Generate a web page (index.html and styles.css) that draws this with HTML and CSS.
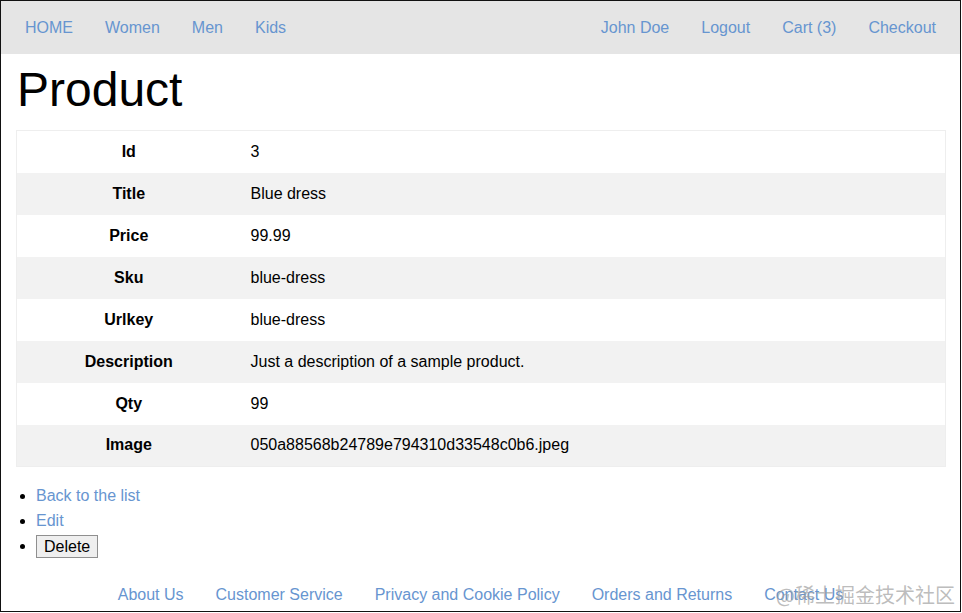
FILE: index.html
```html
<!DOCTYPE html>
<html lang="en">

<head>
    <meta charset="UTF-8">
    <meta name="viewport" content="width=device-width, initial-scale=1.0">
    <title>Product</title>
    <link rel="stylesheet" href="styles.css">
</head>

<body>
    <div class="frame">
        <nav class="topnav">
            <div class="nav-group">
                <a href="#">HOME</a>
                <a href="#">Women</a>
                <a href="#">Men</a>
                <a href="#">Kids</a>
            </div>
            <div class="nav-group">
                <a href="#">John Doe</a>
                <a href="#">Logout</a>
                <a href="#">Cart (3)</a>
                <a href="#">Checkout</a>
            </div>
        </nav>

        <main class="content">
            <h1>Product</h1>
            <table class="details">
                <tr>
                    <th>Id</th>
                    <td>3</td>
                </tr>
                <tr>
                    <th>Title</th>
                    <td>Blue dress</td>
                </tr>
                <tr>
                    <th>Price</th>
                    <td>99.99</td>
                </tr>
                <tr>
                    <th>Sku</th>
                    <td>blue-dress</td>
                </tr>
                <tr>
                    <th>Urlkey</th>
                    <td>blue-dress</td>
                </tr>
                <tr>
                    <th>Description</th>
                    <td>Just a description of a sample product.</td>
                </tr>
                <tr>
                    <th>Qty</th>
                    <td>99</td>
                </tr>
                <tr>
                    <th>Image</th>
                    <td>050a88568b24789e794310d33548c0b6.jpeg</td>
                </tr>
            </table>

            <ul class="actions">
                <li><a href="#">Back to the list</a></li>
                <li><a href="#">Edit</a></li>
                <li>
                    <form action="#" method="POST">
                        <button type="submit">Delete</button>
                    </form>
                </li>
            </ul>
        </main>

        <footer class="footer">
            <a href="#">About Us</a>
            <a href="#">Customer Service</a>
            <a href="#">Privacy and Cookie Policy</a>
            <a href="#">Orders and Returns</a>
            <a href="#">Contact Us</a>
        </footer>

        <div class="watermark">@稀土掘金技术社区</div>
    </div>
</body>

</html>
```

FILE: styles.css
```css
* {
    margin: 0;
    padding: 0;
    box-sizing: border-box;
    font-family: "Liberation Sans", Arial, Helvetica, sans-serif;
}

body {
    background: #fff;
    color: #000;
}

a {
    color: #6795d0;
    text-decoration: none;
}

.frame {
    position: relative;
    width: 961px;
    height: 612px;
    border: 1px solid #111;
    overflow: hidden;
}

.topnav {
    display: flex;
    justify-content: space-between;
    height: 53px;
    padding: 0 8px;
    background: #e5e5e5;
}

.nav-group {
    display: flex;
    align-items: center;
}

.nav-group a {
    padding: 0 16px;
    font-size: 16px;
}

.content {
    padding: 0 15px;
}

h1 {
    font-size: 48px;
    font-weight: normal;
    line-height: 56px;
    margin: 8px 0 12px 1px;
}

.details {
    width: 930px;
    border-collapse: collapse;
    border: 1px solid #eee;
    font-size: 16px;
}

.details tr {
    height: 42px;
}

.details tr:nth-child(even) {
    background: #f2f2f2;
}

.details th {
    width: 224px;
    text-align: center;
    font-weight: bold;
}

.details td {
    padding: 0 10px;
}

.actions {
    margin-top: 16px;
    padding-left: 20px;
    font-size: 16px;
    line-height: 25px;
}

.actions button {
    font-size: 16px;
    padding: 1px 7px;
    line-height: 19px;
    color: #000;
    background: #efefef;
    border: 1px solid #8f8f8f;
    border-radius: 0;
    vertical-align: middle;
}

.footer {
    display: flex;
    justify-content: center;
    margin-top: 24px;
    font-size: 16px;
    line-height: 25px;
}

.footer a {
    padding: 0 16px;
}

.watermark {
    position: absolute;
    right: 5px;
    bottom: 2px;
    font-family: "Noto Sans CJK SC", sans-serif;
    font-size: 20px;
    color: rgba(160, 160, 160, 0.7);
}
```
